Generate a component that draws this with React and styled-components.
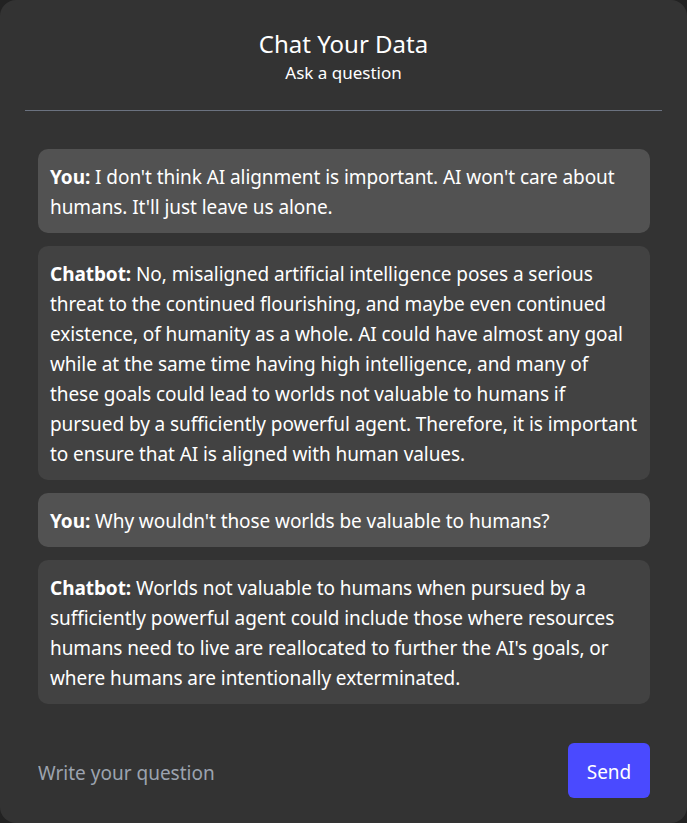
import React from 'react'
import styled, { createGlobalStyle } from 'styled-components'

const GlobalStyle = createGlobalStyle`
  html, body {
    margin: 0;
    padding: 0;
    background: #222222;
  }
  * { box-sizing: border-box; }
`

const StCard = styled.div`
  width: 687px;
  height: 823px;
  background: #333333;
  border-radius: 16px;
  display: flex;
  flex-direction: column;
  font-family: "Noto Sans", "Open Sans", sans-serif;
  color: #ffffff;
`
const StHeader = styled.div`
  display: flex;
  flex-direction: column;
  align-items: center;
  padding-top: 28px;
  padding-bottom: 24px;
  margin: 0 25px;
  border-bottom: 1px solid #6b7280;
`
const Title = styled.h1`
  margin: 0;
  font-size: 24px;
  font-weight: 400;
  line-height: 32px;
`
const Subtitle = styled.p`
  margin: 0;
  font-size: 17px;
  line-height: 26px;
`
const StMessages = styled.div`
  display: flex;
  flex-direction: column;
  gap: 13px;
  padding: 38px 37px 0 38px;
  flex: 1;
`
const Bubble = styled.div`
  background: ${(p) => (p.$user ? '#525252' : '#424242')};
  border-radius: 10px;
  padding: 13px 12px 11px;
  font-size: 19px;
  line-height: 30px;
  letter-spacing: -0.07px;
  b { font-weight: 700; }
`
const StInputRow = styled.div`
  display: flex;
  align-items: center;
  justify-content: space-between;
  padding: 0 37px 25px 38px;
`
const Input = styled.input`
  flex: 1;
  background: transparent;
  border: none;
  outline: none;
  font-family: inherit;
  font-size: 19px;
  color: #ffffff;
  padding: 4px 0 0;
  &::placeholder { color: #9ca3af; }
`
const SendButton = styled.button`
  width: 82px;
  height: 55px;
  border: none;
  border-radius: 6px;
  background: #4a4aff;
  color: #ffffff;
  font-family: inherit;
  font-size: 19px;
  padding-top: 3px;
`

const messages = [
  { user: true, text: "I don't think AI alignment is important. AI won't care about humans. It'll just leave us alone." },
  { user: false, text: 'No, misaligned artificial intelligence poses a serious threat to the continued flourishing, and maybe even continued existence, of humanity as a whole. AI could have almost any goal while at the same time having high intelligence, and many of these goals could lead to worlds not valuable to humans if pursued by a sufficiently powerful agent. Therefore, it is important to ensure that AI is aligned with human values.' },
  { user: true, text: "Why wouldn't those worlds be valuable to humans?" },
  { user: false, text: "Worlds not valuable to humans when pursued by a sufficiently powerful agent could include those where resources humans need to live are reallocated to further the AI's goals, or where humans are intentionally exterminated." },
]

const App = () => {
  return (
    <>
      <GlobalStyle />
      <StCard>
        <StHeader>
          <Title>Chat Your Data</Title>
          <Subtitle>Ask a question</Subtitle>
        </StHeader>
        <StMessages>
          {messages.map((m, i) => (
            <Bubble key={i} $user={m.user}>
              <b>{m.user ? 'You:' : 'Chatbot:'}</b> {m.text}
            </Bubble>
          ))}
        </StMessages>
        <StInputRow>
          <Input placeholder='Write your question' />
          <SendButton>Send</SendButton>
        </StInputRow>
      </StCard>
    </>
  )
}

export default App
